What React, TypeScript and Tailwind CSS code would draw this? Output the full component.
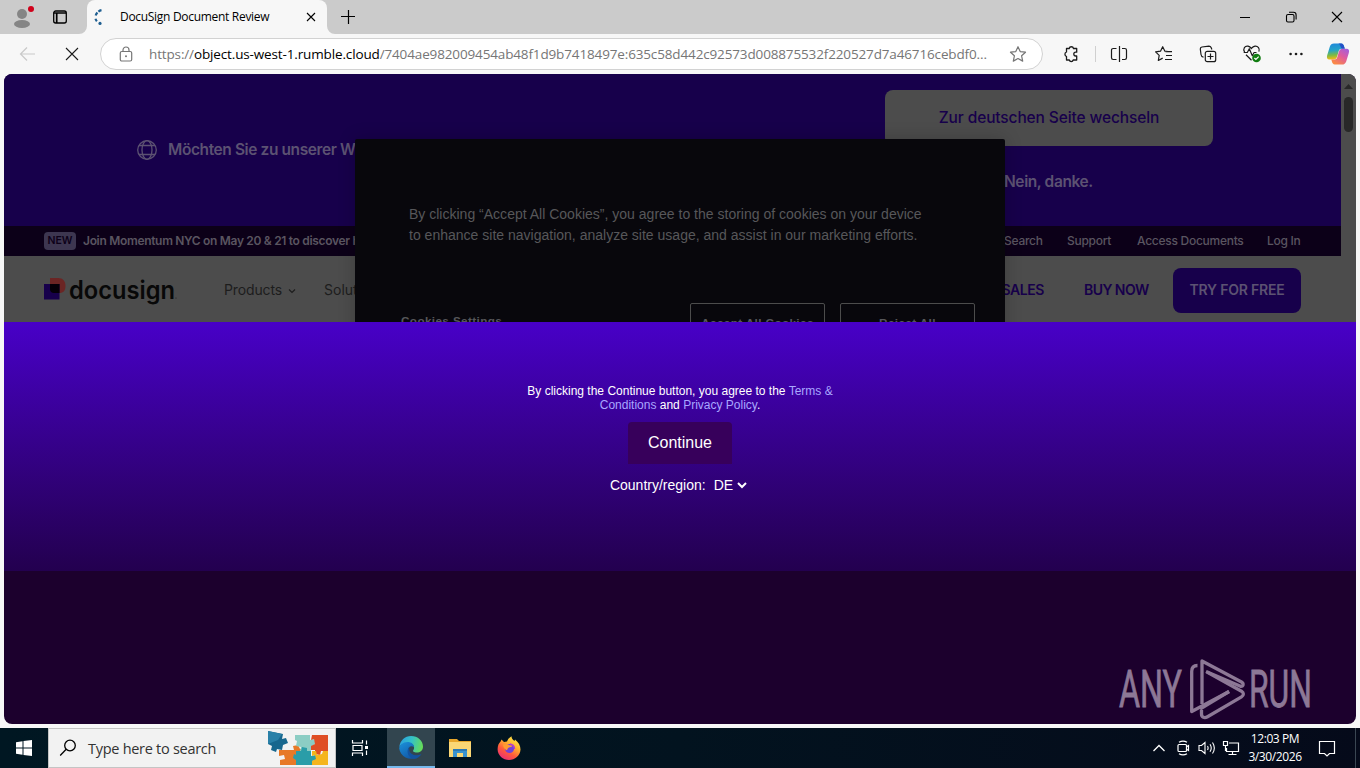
import type { ReactNode } from "react"

const UI = "font-['Open_Sans','Noto_Sans',sans-serif]"
const ARIAL = "font-['Liberation_Sans',Arial,sans-serif]"
const BRAND = "font-[Inter,'Open_Sans',sans-serif]"

type IconProps = { size?: number; className?: string; sw?: number; children: ReactNode }

function Icon({ size = 20, className = "", sw = 1.2, children }: IconProps) {
  return (
    <svg
      width={size}
      height={size}
      viewBox={`0 0 ${size} ${size}`}
      fill="none"
      stroke="currentColor"
      strokeWidth={sw}
      className={`shrink-0 ${className}`}
    >
      {children}
    </svg>
  )
}

function TabBar() {
  return (
    <div className="flex h-[34px] shrink-0 bg-[#cbcbcb] text-black">
      <div className="flex w-[87px] items-center rounded-br-lg pl-3">
        <Icon size={24}>
          <circle cx="10" cy="9" r="5" fill="#858585" stroke="none" />
          <ellipse cx="10" cy="19" rx="8" ry="4" fill="#858585" stroke="none" />
          <circle cx="19" cy="4" r="3" fill="#d0021b" stroke="none" />
        </Icon>
        <Icon size={16} className="ml-4" sw={1.3}>
          <rect x="1.7" y="2" width="12.6" height="12" rx="2" />
          <path d="M2 4h12M4.7 4v10" strokeWidth="1.7" />
        </Icon>
      </div>
      <div className="relative flex w-[240px] items-center rounded-t-lg bg-[#f7f7f7]">
        <svg className="absolute -left-[8px] bottom-0" width="8" height="8">
          <path d="M8 0v8H0a8 8 0 0 0 8-8" fill="#f7f7f7" />
        </svg>
        <svg className="absolute -right-[8px] bottom-0" width="8" height="8">
          <path d="M0 0v8h8a8 8 0 0 1-8-8" fill="#f7f7f7" />
        </svg>
        <Icon size={16} className="ml-[5px]" sw={2.2}>
          <path d="M9.5 1.2A7.6 7.6 0 0 0 3.6 6.8" stroke="#1f5f91" strokeDasharray="3.4 1.3" />
          <path d="M3.5 9.7a7 7 0 0 0 1.4 2.6" stroke="#1f5f91" />
          <circle cx="8" cy="14.4" r="1.6" fill="#1f5f91" stroke="none" />
        </Icon>
        <span className="ml-3 w-[180px] text-[12px] tracking-[-0.3px] whitespace-nowrap">DocuSign Document Review</span>
        <Icon size={10} className="ml-[6px]" sw={1.1}>
          <path d="m1 1 8 8M9 1 1 9" />
        </Icon>
      </div>
      <div className="flex flex-1 items-center">
        <Icon size={14} className="ml-[14px]">
          <path d="M7.5 0v14M0 6.5h14" />
        </Icon>
        <div className="ml-auto flex items-center pr-[17px]">
          <Icon size={12} sw={1}>
            <path d="M1 6.5h10" />
          </Icon>
          <Icon size={12} className="ml-[34px]" sw={1.1}>
            <rect x="1.5" y="3.5" width="7.5" height="7.5" rx="1.5" />
            <path d="M4 1.3h4.5a2.6 2.6 0 0 1 2.6 2.6v4.5" />
          </Icon>
          <Icon size={12} className="ml-[34px]" sw={1.1}>
            <path d="m1 1 10 10M11 1 1 11" />
          </Icon>
        </div>
      </div>
    </div>
  )
}

function CopilotIcon() {
  return (
    <svg width="24" height="24" viewBox="0 0 24 24" className="shrink-0">
      <defs>
        <linearGradient id="cpA" x1="0" y1="0" x2="0.1" y2="1">
          <stop offset="0" stopColor="#1f86dc" />
          <stop offset="0.45" stopColor="#25a4c8" />
          <stop offset="0.75" stopColor="#7cba45" />
          <stop offset="1" stopColor="#f2bb16" />
        </linearGradient>
        <linearGradient id="cpB" x1="1" y1="0" x2="0.3" y2="1">
          <stop offset="0" stopColor="#9a5fe5" />
          <stop offset="0.5" stopColor="#df5b9e" />
          <stop offset="1" stopColor="#fb8a45" />
        </linearGradient>
      </defs>
      <path d="M8 1.5h7.2c1.8 0 2.4 1.4 2.9 3l.7 2.3h-3.2c-2 0-2.6 1.3-3.1 3l-1.3 4.4c-.7 2.3-1.7 3.3-3.8 3.3H3.5c-2.5 0-3-1.8-2.3-4.2l2.6-8.5C4.6 2.5 5.8 1.5 8 1.5Z" fill="url(#cpA)" />
      <path d="M12.5 1.5h2.7c1.8 0 2.4 1.4 2.9 3l.7 2.3h-3.2c-1.2-2-1.3-4.1-3.1-5.3Z" fill="#2451c7" />
      <path d="M16 22.5H8.8c-1.8 0-2.4-1.4-2.9-3l-.6-2h3.1c2 0 2.6-1.3 3.1-3l1.3-4.5c.7-2.3 1.7-3.3 3.8-3.3h3.9c2.5 0 3 1.8 2.3 4.2l-2.6 8.5c-.8 2.1-2 3.1-4.2 3.1Z" fill="url(#cpB)" />
    </svg>
  )
}

function Toolbar() {
  return (
    <div className="flex h-10 shrink-0 items-center bg-[#f7f7f7] text-[#1b1b1b]">
      <Icon size={18} className="ml-[18px] text-[#c9c9c9]">
        <path d="M17 9H2.5M9 2.5 2.5 9 9 15.5" />
      </Icon>
      <Icon size={14} className="ml-[29px]" sw={1.1}>
        <path d="m1 1 12 12M13 1 1 13" />
      </Icon>
      <div className="ml-[21px] flex h-8 w-[943px] items-center rounded-full border border-[#d2d2d2] bg-white text-[#767676]">
        <Icon size={16} className="ml-[17px]" sw={1.2}>
          <rect x="2.3" y="5.5" width="11.4" height="9.5" rx="1.5" />
          <path d="M5 5.5V4a3 3 0 0 1 6 0v1.5" />
          <circle cx="8" cy="10.3" r="1" fill="currentColor" stroke="none" />
        </Icon>
        <span className={`ml-[15px] w-[853px] shrink-0 text-[13.5px] tracking-[-0.14px] whitespace-nowrap ${UI}`}>
          https://<span className="text-black">object.us-west-1.rumble.cloud</span>
          /7404ae982009454ab48f1d9b7418497e:635c58d442c92573d008875532f220527d7a46716cebdf0...
        </span>
        <Icon size={18} className="ml-[7px]" sw={1.2}>
          <path d="m9 1.7 2.2 4.9 5.3.6-3.9 3.6 1.1 5.3L9 13.5l-4.7 2.6 1.1-5.3L1.5 7.2l5.3-.6Z" strokeLinejoin="round" />
        </Icon>
      </div>
      <Icon size={18} className="ml-[19px]" sw={1.3}>
        <path d="M4.5 3.5h2.7a2.2 2.2 0 0 1 4.3 0h3.2v3.7h-1a1.9 1.9 0 0 0 0 3.8h1v4h-3.5a2 2 0 0 1-3.9 0H4.5v-3.5a2.4 2.4 0 0 1 0-4.5Z" strokeLinejoin="round" />
      </Icon>
      <div className="ml-[15px] h-4 w-px bg-[#d0d0d0]" />
      <Icon size={18} className="ml-[14px]" sw={1.2}>
        <path d="M6.500 3.500H3.200c-1 0-1.700.7-1.700 1.700v7.600c0 1 .7 1.700 1.700 1.700h3.300M12 3.500h2.800c1 0 1.700.7 1.700 1.700v7.600c0 1-.7 1.700-1.700 1.700H12M9.500 1v16" />
      </Icon>
      <Icon size={18} className="ml-[27px]" sw={1.2}>
        <path d="M13 6.500 9.900 6.200 7.700 1.700 5.500 6.200.6 6.900l3.600 3.500-.9 5.100 4.400-2.400M10.500 6.700h6.500M11 10.500h6M10 14.500h7" strokeLinejoin="round" />
      </Icon>
      <Icon size={18} className="ml-[26px]" sw={1.2}>
        <rect x="6.3" y="6.3" width="10.400" height="10.400" rx="2" />
        <path d="M11.500 8.500v6M8.500 11.500h6M4.500 12.200C2.800 12 2.200 11 2 9.500L1.300 4c0-1 .6-1.800 1.600-2l7-.8c1 0 1.800.4 2.200 1.300l.8 2" />
      </Icon>
      <Icon size={20} className="ml-[25px]" sw={1.2}>
        <path d="M2.600 8.200C.5 4.700 3 1.700 6 2.200c1.700.3 2.500 1.200 3.400 2.300 1-1.300 2-2.100 3.600-2.300 2.900-.3 5.100 2.400 3.900 5.400M4 10.800l5.500 5.400M1.700 8.500h3.600l2-3.800 3 7 1.800-3.200h2.400" strokeLinejoin="round" />
        <circle cx="14.5" cy="14" r="4.3" fill="#107c10" stroke="none" />
        <path d="m12.400 14 1.500 1.500 2.800-2.800" stroke="white" />
      </Icon>
      <Icon size={16} className="ml-[26px]">
        <g fill="currentColor" stroke="none">
          <circle cx="2.6" cy="8" r="1.3" />
          <circle cx="8" cy="8" r="1.3" />
          <circle cx="13.4" cy="8" r="1.3" />
        </g>
      </Icon>
      <div className="ml-[22px]">
        <CopilotIcon />
      </div>
    </div>
  )
}

function LanguageBanner() {
  return (
    <div className="flex h-[152px] bg-[#17004b] text-[#5c5272]">
      <div className="flex h-full w-[881px] items-center pl-[133px] whitespace-nowrap">
        <Icon size={20} sw={1.3}>
          <circle cx="10" cy="10" r="9.3" />
          <ellipse cx="10" cy="10" rx="5" ry="9.3" />
          <path d="M2 5.5h16M2 14.5h16" />
        </Icon>
        <span className="-mt-px ml-[11px] text-[15.5px] font-semibold tracking-[-0.4px]">Möchten Sie zu unserer Website für Deutschland wechseln?</span>
      </div>
      <div className="flex w-[328px] flex-col items-center pt-4 text-[15.5px] font-medium">
        <div className="flex h-14 w-full items-center justify-center rounded-lg bg-[#4c4c4c] pb-px tracking-[-0.12px] text-[#17004b]">
          Zur deutschen Seite wechseln
        </div>
        <div className="mt-6 w-[90px] text-left font-semibold tracking-[-0.4px] whitespace-nowrap">Nein, danke.</div>
      </div>
    </div>
  )
}

function Announcement() {
  return (
    <div className="flex h-[30px] items-center bg-[#0c0018] pr-10 pl-10 text-[12px] font-semibold tracking-[-0.32px] whitespace-nowrap text-[#5a5560]">
      <span className="flex h-[18px] w-8 items-center justify-center rounded bg-[#3d3650] text-[10.5px] font-semibold tracking-normal text-[#0c0018]">
        NEW
      </span>
      <span className="ml-[7px] w-[400px] overflow-hidden">Join Momentum NYC on May 20 &amp; 21 to discover how agreement</span>
      <div className="ml-auto flex gap-6 font-medium tracking-[-0.27px]">
        <span className="w-[39px]">Search</span>
        <span className="w-[46px]">Support</span>
        <span className="w-[106px]">Access Documents</span>
        <span className="w-[34px]">Log In</span>
      </div>
    </div>
  )
}

function MainNav() {
  return (
    <div className="flex h-[66px] items-center bg-[#4c4c4c] pt-[2px] pr-10 pl-10 whitespace-nowrap">
      <svg width="22" height="22" viewBox="0 0 22 22" className="-mt-[3px]">
        <path d="M6 0h8c5 0 7.5 3.5 7.5 8s-2 7-6.5 7H6Z" fill="#6b2524" />
        <path d="M0 6h15.5v15.5H0Z" fill="#17004b" />
        <path d="M6 6h9.5v9H10c-2.5 0-4-1.5-4-4Z" fill="#050008" />
      </svg>
      <svg width="110" height="34" className="ml-1 overflow-visible">
        <text x="-1" y="25.5" textLength="106" lengthAdjust="spacingAndGlyphs" fontFamily="Inter" fontSize="25" fontWeight="600" fill="#080808">
          docusign
        </text>
        <circle cx="106" cy="25" r="0.6" fill="#222" />
      </svg>
      <div className="-mt-[2px] ml-11 flex items-center gap-[6px] text-[14px] text-[#1d1d1d]">
        <span className="w-[58px] tracking-[-0.13px]">Products</span>
        <Icon size={8} sw={1.2} className="mt-[3px]">
          <path d="m1 2.5 3 3 3-3" />
        </Icon>
        <span className="ml-[22px]">Solutions</span>
      </div>
      <div className="ml-auto flex items-center text-[14px] font-semibold text-[#17004b]">
        <span className="-mt-[2px] tracking-[-0.45px]">SALES</span>
        <span className="-mt-[2px] ml-10 w-[65px] tracking-[-0.55px]">BUY NOW</span>
        <span className="ml-6 flex h-[45px] w-32 items-center justify-center rounded-lg bg-[#17004b] pb-[2px] tracking-[-0.2px] text-[#5c5272]">TRY FOR FREE</span>
      </div>
    </div>
  )
}

function CookieDialog() {
  return (
    <div className={`absolute top-[65px] left-[351px] h-[260px] w-[650px] rounded-[2px] bg-[#08070c] text-[#57575a] shadow-[0_0_18px_rgba(0,0,0,0.2)] ${ARIAL}`}>
      <p className="pt-[65px] pl-[54px] text-[14.02px] leading-[21px] whitespace-nowrap">
        By clicking “Accept All Cookies”, you agree to the storing of cookies on your device
        <br />
        to enhance site navigation, analyze site usage, and assist in our marketing efforts.
      </p>
      <div className="mt-[57px] flex items-start pl-[46px] text-[11.7px] font-bold tracking-[0.4px]">
        <span className="w-[289px] pt-[10px] leading-[15px]">Cookies Settings</span>
        <span className="h-10 w-[135px] rounded-[2px] border border-[#4c4c4c] pt-[11px] text-center leading-[16px]">Accept All Cookies</span>
        <span className="ml-[15px] h-10 w-[135px] rounded-[2px] border border-[#4c4c4c] pt-[11px] text-center leading-[16px]">Reject All</span>
      </div>
    </div>
  )
}

function Consent() {
  return (
    <div className={`flex h-[249px] flex-col items-center bg-linear-to-b from-[#4800c8] to-[#23004f] pt-[62px] text-white ${ARIAL}`}>
      <p className="text-center text-[12px] leading-[14px] whitespace-nowrap">
        By clicking the Continue button, you agree to the <span className="text-[#a9a7ff]">Terms &amp;</span>
        <br />
        <span className="text-[#a9a7ff]">Conditions</span> and <span className="text-[#a9a7ff]">Privacy Policy</span>.
      </p>
      <button className="mt-[10px] h-[42px] w-[104px] rounded-t-[4px] bg-[#37005b] text-[16px] leading-[42px]">Continue</button>
      <div className="mt-[13px] mr-[3px] flex items-center text-[14px] leading-4">
        <span>Country/region:</span>
        <span className="ml-2">DE</span>
        <Icon size={10} className="ml-[4px]" sw={2}>
          <path d="m1 3 4 4 4-4" />
        </Icon>
      </div>
    </div>
  )
}

function Watermark() {
  return (
    <svg width="196" height="64" viewBox="0 0 196 64" className="absolute right-[43px] bottom-[3px]" fill="#8d7896">
      <g stroke="#8d7896" strokeWidth="0.8" className="font-[family-name:Roboto] text-[51px] font-normal">
        <text x="2" y="50" textLength="63" lengthAdjust="spacingAndGlyphs">
          ANY
        </text>
        <text x="132" y="50" textLength="63" lengthAdjust="spacingAndGlyphs">
          RUN
        </text>
      </g>
      <g fill="none" stroke="#8d7896" strokeWidth="3.3" strokeLinejoin="round">
        <path d="M80.5 8.5c-4 0-5.8 2-5.8 6v40l37.5-20" />
        <path d="M85 47V4l39.5 21c2.500 1.500 2 5-1 4.300L89 14.500" />
        <path d="M84.500 53v4c0 3.500 3 4.500 6 2.800l34-20c2.500-1.500 2.500-4 0-5.600L90 15" />
        <path d="M112 34.500 83 52" />
      </g>
    </svg>
  )
}

function PuzzleArt() {
  return (
    <svg width="66" height="38" viewBox="0 0 66 38" className="mr-[4px] ml-auto shrink-0">
      <path d="M14 21h15l-1-4 5-1 2 4h7v16H15v-5l5-1-1-4-5 1Z" fill="#e77927" />
      <path d="M30 6h15v5l4-1 2 4-5 4v4H35l1-4-5-1 1-5-2-1Z" fill="#8ccdc4" />
      <path d="M47 6h16v16h-7l-1 4-5-1v-4h-4v-4l4-2-1-5-3 1Z" fill="#df4e25" />
      <path d="M31 22h5l1-4 5 1v3h4v5l5-1 1 5-5 1v4H31v-5l-3-2 1-4 2 1Z" fill="#2a9da8" />
      <path d="M47 22h4l1 4 5-1 1-3h5v14H47v-4l4-2-1-4-3 1Z" fill="#f5b51d" />
      <path d="M3 2 18 5l-1 5 4-1 2 5-5 2-1 5-5-1-1 3-5-2 1-4-4-2Z" fill="#17678e" />
      <path d="m3 2 14 3-4 6L3 15Z" fill="#2980a8" />
    </svg>
  )
}

function EdgeLogo() {
  return (
    <svg width="24" height="24" viewBox="0 0 24 24" className="mt-[2px]">
      <defs>
        <linearGradient id="edTop" x1="0" y1="0.3" x2="1" y2="0.5">
          <stop offset="0" stopColor="#2a9fe0" />
          <stop offset="0.5" stopColor="#35c2c6" />
          <stop offset="1" stopColor="#66dc58" />
        </linearGradient>
        <linearGradient id="edLow" x1="0" y1="0" x2="0.6" y2="1">
          <stop offset="0" stopColor="#1b92db" />
          <stop offset="1" stopColor="#1159a8" />
        </linearGradient>
      </defs>
      <path d="M.3 11C1 4.500 6 0 12 0c7 0 12 5 12 10.500 0 4-3 6-6.200 6-2.800 0-4.400-1-3.500-2.200.6-.8.8-1.500.8-2.500C15 9 12.500 7 9 7 5 7 2 8.500.3 11Z" fill="url(#edTop)" />
      <path d="M.2 12.500C.5 9 4 6 8.500 6c4 0 6.500 2.300 6.500 5-3-2-6 0-6 4 0 4.500 4 7 8.500 6.500A12 12 0 0 1 .2 12.500Z" fill="url(#edLow)" />
      <path d="M10.500 10.500c-4 4-1.500 11.500 4.500 12.500 3.500-.3 6-2.500 7.500-5-5 2.500-11 1-12-3-.4-1.600-.3-3.200 0-4.500Z" fill="#13539f" />
    </svg>
  )
}

function FolderIcon() {
  return (
    <svg width="22" height="20" viewBox="0 0 22 20">
      <path d="M0 1h8l2 2h12v16H0Z" fill="#e9a72b" />
      <path d="M0 4h22v15H0Z" fill="#fbd775" />
      <path d="M4 11h14v8h-4v-4H8v4H4Z" fill="#3a93cf" />
      <path d="M4 11h14v2H4Z" fill="#2b78b4" />
    </svg>
  )
}

function FirefoxIcon() {
  return (
    <svg width="24" height="24" viewBox="0 0 24 24">
      <defs>
        <linearGradient id="ff" x1="0.8" y1="0" x2="0.2" y2="1">
          <stop offset="0" stopColor="#fff04f" />
          <stop offset="0.35" stopColor="#ffb22e" />
          <stop offset="0.65" stopColor="#ff5a3c" />
          <stop offset="1" stopColor="#e8287c" />
        </linearGradient>
      </defs>
      <path d="M4.500 3.500 7 6l3-.5C11 3 12.500 1.500 14.500.2c0 2.500 1.300 3.500 3 4.800L18 3.500c3.500 2.700 5.500 6 5.500 10C23.200 19.500 18 24 12 24S.6 19.200.6 13.200c0-3.700 1.200-6 3-7.700Z" fill="url(#ff)" />
      <circle cx="12.5" cy="12.5" r="4.6" fill="#7042d8" />
      <path d="M6 8.500c2.200-1 4.500-.7 6.500.8l3.500.3c-1.200 1.700-3 1.500-4.500 2.200-1 .5-.8 2-1.800 2.400C7.500 13.500 6 11 6 8.500Z" fill="#ff9b31" />
      <path d="M13 8c3 .5 4.500 2.500 4.500 5" stroke="#b33ad3" strokeWidth="1.3" fill="none" />
    </svg>
  )
}

function Taskbar() {
  return (
    <div className={`flex h-10 shrink-0 items-center bg-linear-to-r from-[#001722] via-[#02131f] to-[#050a1a] text-white ${UI}`}>
      <div className="flex w-12 justify-center">
        <svg width="16" height="16" viewBox="0 0 16 16" fill="white">
          <path d="M0 2.2 6.5 1.3v6.2H0ZM7.5 1.1 16 0v7.5H7.5ZM0 8.5h6.5v6.2L0 13.8ZM7.5 8.5H16V16l-8.5-1.1Z" />
        </svg>
      </div>
      <div className="flex h-10 w-72 items-center border border-[#c4c4c4] bg-[#f2f2f2] text-[#333]">
        <Icon size={18} className="ml-[10px] text-black" sw={1.3}>
          <circle cx="11" cy="6.5" r="5.3" />
          <path d="m7.2 10.3-6 6.2" />
        </Icon>
        <span className="mt-px ml-[11px] text-[14.5px] tracking-[-0.28px] whitespace-nowrap">Type here to search</span>
        <PuzzleArt />
      </div>
      <div className="flex w-[51px] justify-center pr-[3px]">
        <Icon size={18} sw={1.2}>
          <path d="M1.5 1v3h10V1M1.5 17v-3h10v3M2 6.5h9v5H2ZM15.5 1.500v4M15.500 11.500V16" />
          <path d="M14 7h3v3h-3Z" fill="white" stroke="none" />
        </Icon>
      </div>
      <div className="flex h-10 w-12 items-center justify-center border-b-2 border-[#76b9ed] bg-[#32454f]">
        <EdgeLogo />
      </div>
      <div className="flex w-[49px] justify-center">
        <FolderIcon />
      </div>
      <div className="flex w-[49px] justify-center">
        <FirefoxIcon />
      </div>
      <div className="ml-auto flex h-full items-center">
        <Icon size={14} sw={1.3}>
          <path d="m1.5 10 5.500-5.500L12.500 10" />
        </Icon>
        <Icon size={16} className="ml-[9px]" sw={1.2}>
          <path d="M4 2.300q4-2.500 8 0M4 13.700q4 2.500 8 0M11.500 6.800l2-1.300v5l-2-1.300" />
          <rect x="3" y="4.5" width="8.5" height="7" rx="1" />
        </Icon>
        <Icon size={18} className="ml-[7px]" sw={1.1}>
          <path d="M1 6.500h2.500L7 3.500v11l-3.500-3H1ZM9.500 7q1.200 2 0 4M12 5.200q2.500 3.800 0 7.600M14.500 3.500q3.700 5.500 0 11" />
        </Icon>
        <Icon size={18} className="ml-[6px]" sw={1.2}>
          <path d="M7 4h9.500v8.500h-12V9M10.500 12.500V15M6.500 15.500h8M1.500 2.500h4v4h-4ZM3.500 6.500V12" />
        </Icon>
        <div className="w-[70px] text-center text-[12px] leading-[18px] tracking-[-0.4px] whitespace-nowrap">
          12:03 PM
          <br />
          3/30/2026
        </div>
        <Icon size={18} className="mr-[19px] ml-[8px]" sw={1.2}>
          <path d="M1.500 2.500h15v12h-5l-2.500 2.500-2.500-2.500h-5Z" />
        </Icon>
        <div className="mr-1 h-full w-px bg-[#3a4652]" />
      </div>
    </div>
  )
}

export default function App() {
  return (
    <div className={`flex h-[768px] w-[1360px] flex-col overflow-hidden bg-[#f7f7f7] ${UI}`}>
      <TabBar />
      <Toolbar />
      <main className={`relative mx-1 mb-1 flex flex-1 flex-col overflow-hidden rounded-lg bg-[#1c002d] ${BRAND}`}>
        <div className="relative flex h-[248px] shrink-0 overflow-hidden">
          <div className="w-[1337px]">
            <LanguageBanner />
            <Announcement />
            <MainNav />
          </div>
          <div className="flex w-[15px] flex-col items-center bg-[#4c4c4c]">
            <svg width="9" height="5" className="mt-[10px]">
              <path d="M0 5 4.5 0 9 5Z" fill="#282828" />
            </svg>
            <div className="mt-2 h-[35px] w-[9px] rounded-full bg-[#282828]" />
          </div>
          <CookieDialog />
        </div>
        <Consent />
        <Watermark />
      </main>
      <Taskbar />
    </div>
  )
}
